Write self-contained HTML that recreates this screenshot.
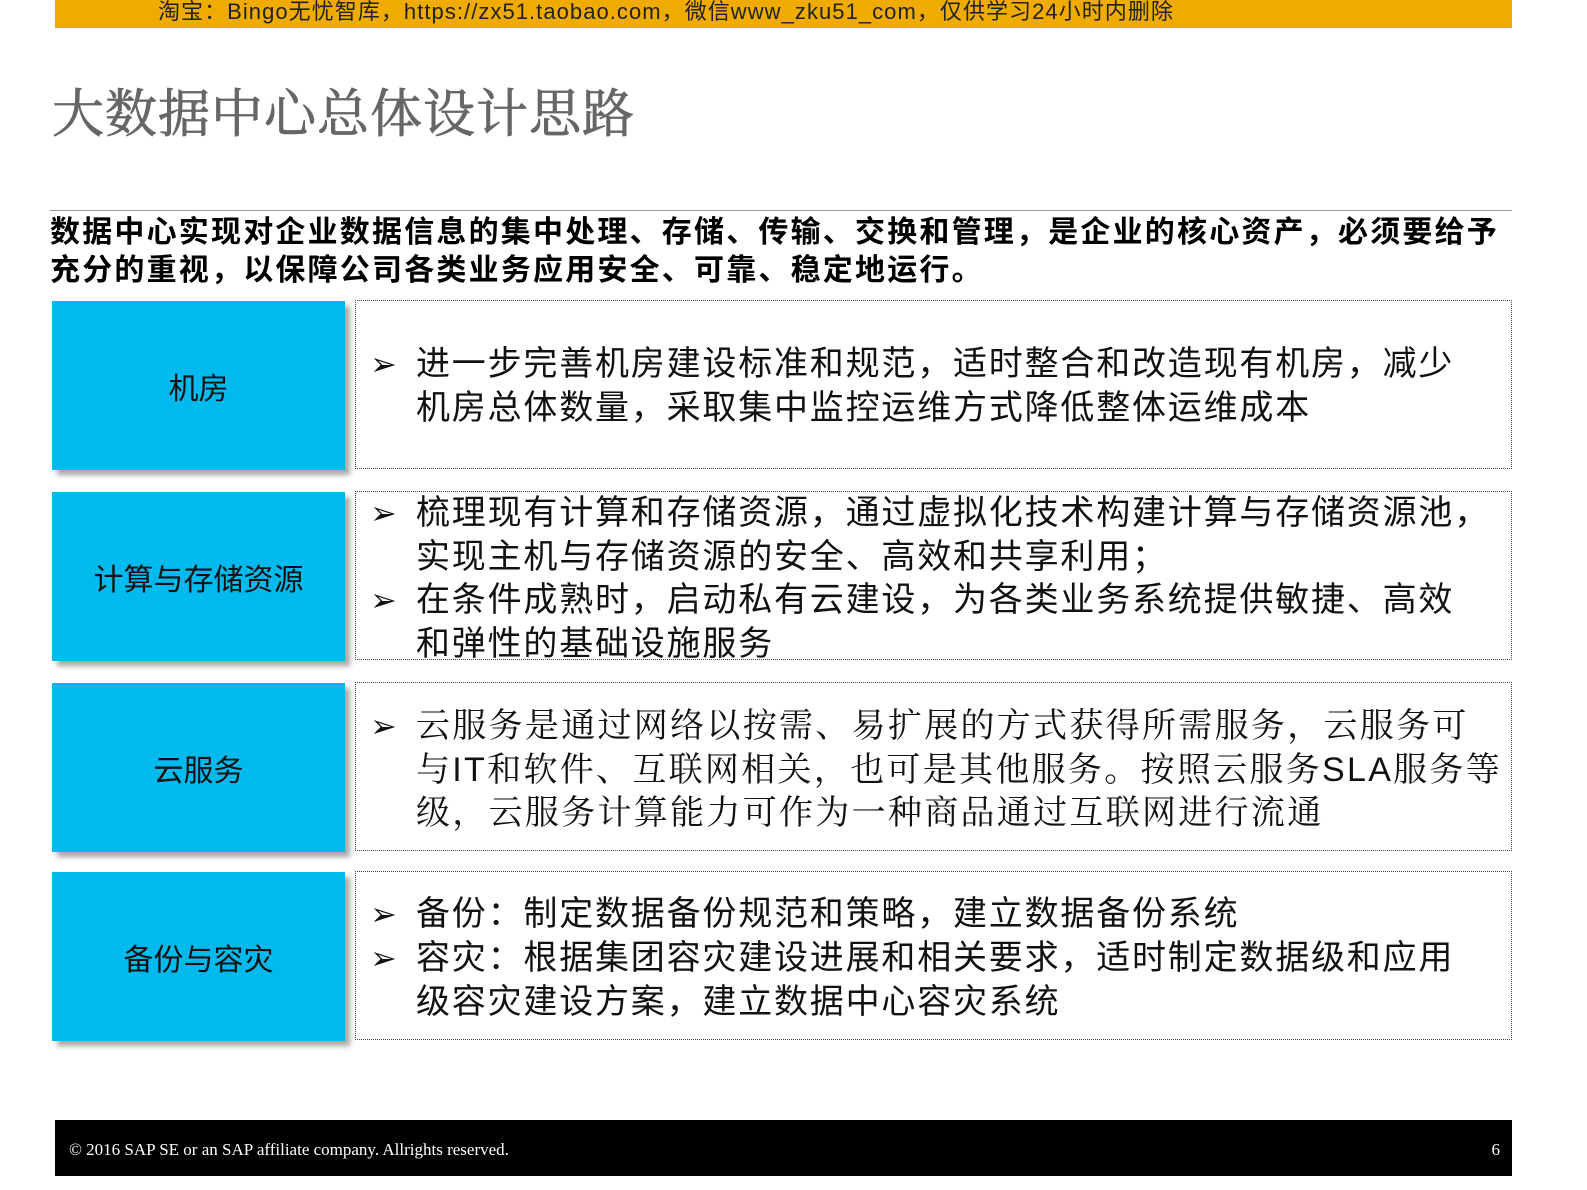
<!DOCTYPE html><html><head><meta charset="utf-8"><style>
body{margin:0;width:1587px;height:1190px;background:#fff;position:relative;font-family:"Liberation Sans","Noto Sans CJK SC",sans-serif;overflow:hidden}
.a{position:absolute}
.top{left:55px;top:0;width:1457px;height:28px;background:#f0ab00;font-size:22px;line-height:24px;color:#222;letter-spacing:1.05px}
.top span{position:absolute;left:103px;top:0;white-space:nowrap}
h1{position:absolute;left:52px;top:78px;margin:0;font-size:52px;font-weight:normal;color:#666;font-family:"Noto Serif CJK SC",serif;line-height:64px;letter-spacing:1px;-webkit-text-stroke:0.8px #666}
.rule{left:50px;top:210px;width:1462px;height:1px;background:#999}
.intro{left:50px;top:214px;font-size:30px;font-weight:bold;line-height:38px;color:#000;width:1520px;letter-spacing:2.2px;white-space:nowrap}
.lab{position:absolute;left:52px;width:293px;height:169px;background:#00b9ed;box-shadow:5px 5px 5px rgba(0,0,0,.35);display:flex;align-items:center;justify-content:center;font-size:30px;color:#111}
.box{position:absolute;left:355px;width:1157px;height:169px;border:1px dotted #444;box-sizing:border-box}
.it{position:absolute;left:60px;font-size:34px;line-height:43.5px;color:#111;white-space:nowrap;letter-spacing:1.8px}
.it .b{position:absolute;left:-46px;top:0;font-size:32px}
.ser{font-family:"Liberation Sans","Noto Serif CJK SC",serif;letter-spacing:2.3px}
.foot{left:55px;top:1120px;width:1457px;height:56px;background:#000;color:#fff;font-family:"Liberation Serif",serif;font-size:17px}
</style></head><body>
<div class="a top"><span>淘宝：Bingo无忧智库，https://zx51.taobao.com，微信www_zku51_com，仅供学习24小时内删除</span></div>
<h1>大数据中心总体设计思路</h1>
<div class="a rule"></div>
<div class="a intro">数据中心实现对企业数据信息的集中处理、存储、传输、交换和管理，是企业的核心资产，必须要给予<br>充分的重视，以保障公司各类业务应用安全、可靠、稳定地运行。</div>

<div class="lab" style="top:301px">机房</div>
<div class="box" style="top:300px"><div class="it" style="top:42px"><span class="b">➢</span>进一步完善机房建设标准和规范，适时整合和改造现有机房，减少<br>机房总体数量，采取集中监控运维方式降低整体运维成本</div></div>

<div class="lab" style="top:492px">计算与存储资源</div>
<div class="box" style="top:491px"><div class="it" style="top:0px"><span class="b">➢</span>梳理现有计算和存储资源，通过虚拟化技术构建计算与存储资源池，<br>实现主机与存储资源的安全、高效和共享利用；</div><div class="it" style="top:87px"><span class="b">➢</span>在条件成熟时，启动私有云建设，为各类业务系统提供敏捷、高效<br>和弹性的基础设施服务</div></div>

<div class="lab" style="top:683px">云服务</div>
<div class="box" style="top:682px"><div class="it ser" style="top:22px"><span class="b">➢</span>云服务是通过网络以按需、易扩展的方式获得所需服务，云服务可<br>与IT和软件、互联网相关，也可是其他服务。按照云服务SLA服务等<br>级，云服务计算能力可作为一种商品通过互联网进行流通</div></div>

<div class="lab" style="top:872px">备份与容灾</div>
<div class="box" style="top:871px"><div class="it" style="top:21px"><span class="b">➢</span>备份：制定数据备份规范和策略，建立数据备份系统</div><div class="it" style="top:65px"><span class="b">➢</span>容灾：根据集团容灾建设进展和相关要求，适时制定数据级和应用<br>级容灾建设方案，建立数据中心容灾系统</div></div>

<div class="a foot"><span class="a" style="left:14px;top:20px">© 2016 SAP SE or an SAP affiliate company. Allrights reserved.</span><span class="a" style="right:12px;top:20px">6</span></div>
</body></html>
